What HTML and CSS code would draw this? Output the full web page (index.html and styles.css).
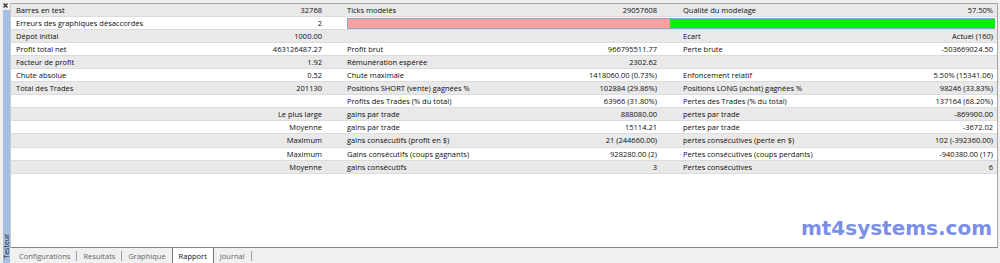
FILE: index.html
```html
<!DOCTYPE html>
<html lang="fr">
<head>
<meta charset="utf-8">
<title>Testeur - Rapport</title>
<link rel="stylesheet" href="styles.css">
</head>
<body>
<div class="app">
  <aside class="side">
    <div class="close">
      <svg viewBox="0 0 5 5" width="5" height="5"><path d="M0.5 0.5 L4.5 4.5 M4.5 0.5 L0.5 4.5" stroke="#222" stroke-width="1.1" fill="none"/></svg>
    </div>
    <div class="strip"><span class="side-title">Testeur</span></div>
  </aside>
  <div class="main">
    <div class="frame">
      <div class="report">
        <div class="row alt">
          <span class="k1">Barres en test</span><span class="v1">32768</span>
          <span class="k2">Ticks modelés</span><span class="v2">29057608</span>
          <span class="k3">Qualité du modelage</span><span class="v3">57.50%</span>
        </div>
        <div class="row">
          <span class="k1">Erreurs des graphiques désaccordés</span><span class="v1">2</span>
          <span class="bar bar-bad"></span>
          <span class="bar bar-good"></span>
        </div>
        <div class="row alt">
          <span class="k1">Dépot initial</span><span class="v1">1000.00</span>
          <span class="k2"></span><span class="v2"></span>
          <span class="k3">Ecart</span><span class="v3">Actuel (160)</span>
        </div>
        <div class="row">
          <span class="k1">Profit total net</span><span class="v1">463126487.27</span>
          <span class="k2">Profit brut</span><span class="v2">966795511.77</span>
          <span class="k3">Perte brute</span><span class="v3">-503669024.50</span>
        </div>
        <div class="row alt">
          <span class="k1">Facteur de profit</span><span class="v1">1.92</span>
          <span class="k2">Rémunération espérée</span><span class="v2">2302.62</span>
          <span class="k3"></span><span class="v3"></span>
        </div>
        <div class="row">
          <span class="k1">Chute absolue</span><span class="v1">0.52</span>
          <span class="k2">Chute maximale</span><span class="v2">1418060.00 (0.73%)</span>
          <span class="k3">Enfoncement relatif</span><span class="v3">5.50% (15341.06)</span>
        </div>
        <div class="row alt">
          <span class="k1">Total des Trades</span><span class="v1">201130</span>
          <span class="k2">Positions SHORT (vente) gagnées %</span><span class="v2">102884 (29.86%)</span>
          <span class="k3">Positions LONG (achat) gagnées %</span><span class="v3">98246 (33.83%)</span>
        </div>
        <div class="row">
          <span class="k1"></span><span class="v1"></span>
          <span class="k2">Profits des Trades (% du total)</span><span class="v2">63966 (31.80%)</span>
          <span class="k3">Pertes des Trades (% du total)</span><span class="v3">137164 (68.20%)</span>
        </div>
        <div class="row alt">
          <span class="k1"></span><span class="v1">Le plus large</span>
          <span class="k2">gains par trade</span><span class="v2">888080.00</span>
          <span class="k3">pertes par trade</span><span class="v3">-869900.00</span>
        </div>
        <div class="row">
          <span class="k1"></span><span class="v1">Moyenne</span>
          <span class="k2">gains par trade</span><span class="v2">15114.21</span>
          <span class="k3">pertes par trade</span><span class="v3">-3672.02</span>
        </div>
        <div class="row alt">
          <span class="k1"></span><span class="v1">Maximum</span>
          <span class="k2">gains consécutifs (profit en $)</span><span class="v2">21 (244660.00)</span>
          <span class="k3">pertes consécutives (perte en $)</span><span class="v3">102 (-392360.00)</span>
        </div>
        <div class="row">
          <span class="k1"></span><span class="v1">Maximum</span>
          <span class="k2">Gains consécutifs (coups gagnants)</span><span class="v2">928280.00 (2)</span>
          <span class="k3">Pertes consécutives (coups perdants)</span><span class="v3">-940380.00 (17)</span>
        </div>
        <div class="row alt">
          <span class="k1"></span><span class="v1">Moyenne</span>
          <span class="k2">gains consécutifs</span><span class="v2">3</span>
          <span class="k3">Pertes consécutives</span><span class="v3">6</span>
        </div>
      </div>
      <div class="canvas"><span class="brand">mt4systems.com</span></div>
    </div>
    <nav class="tabs">
      <span class="tab">Configurations</span><span class="sep"></span>
      <span class="tab">Resultats</span><span class="sep"></span>
      <span class="tab">Graphique</span>
      <span class="tab active">Rapport</span>
      <span class="tab">Journal</span><span class="sep"></span>
    </nav>
  </div>
</div>
</body>
</html>
```

FILE: styles.css
```css
* { box-sizing: border-box; margin: 0; padding: 0; }

html, body {
  width: 1000px;
  height: 263px;
  overflow: hidden;
  background: #f0f0f0;
}

body {
  font-family: "Open Sans", "Noto Sans", sans-serif;
  font-size: 7.5px;
  color: #0d0d0d;
}

.app {
  display: flex;
  height: 263px;
}

/* left docking strip */
.side {
  width: 10px;
  display: flex;
  flex-direction: column;
  padding-left: 3px;
}

.close {
  height: 10px;
  display: flex;
  align-items: center;
}

.close svg { display: block; }

.strip {
  flex: 1;
  width: 7px;
  background: #a7bfe1;
  display: flex;
  flex-direction: column;
  justify-content: flex-end;
  align-items: center;
  padding-bottom: 4px;
}

.side-title {
  writing-mode: vertical-rl;
  transform: rotate(180deg);
  font-size: 7px;
  line-height: 7px;
  color: #111;
}

/* main area */
.main {
  flex: 1;
  display: flex;
  flex-direction: column;
  padding-right: 2px;
}

.frame {
  flex: 1;
  margin-top: 3px;
  background: #fff;
  border: 1px solid #a5a5a5;
  border-left-color: #c9c9c9;
  border-bottom-color: #868686;
  display: flex;
  flex-direction: column;
}

.row {
  display: grid;
  grid-template-columns: 159px 165px 165px 170px 165px 162px;
  height: 13.05px;
  border-bottom: 1px solid #dcdcdc;
  align-items: center;
  line-height: 12px;
  white-space: nowrap;
}

.row.alt { background: #e9e9e9; }

.k1 { padding-left: 5px; }
.v1 { text-align: right; padding-right: 13px; }
.k2 { padding-left: 12px; }
.v2 { text-align: right; padding-right: 13px; }
.k3 { padding-left: 13px; }
.v3 { text-align: right; padding-right: 4px; }

.bar {
  height: 11px;
  border-top: 1px solid #8ea6c2;
  border-bottom: 1px solid #8ea6c2;
}

.bar-bad {
  grid-column: 3 / 5;
  margin-left: 12px;
  background: #f9a0a0;
  border-left: 1px solid #8ea6c2;
}

.bar-good {
  grid-column: 5 / 7;
  margin-right: 2px;
  background: #00f000;
}

.canvas {
  flex: 1;
  display: flex;
  justify-content: flex-end;
  align-items: flex-end;
  padding: 0 5px 9px 0;
}

.brand {
  font-family: "DejaVu Sans", Verdana, sans-serif;
  font-weight: bold;
  font-size: 20px;
  line-height: 20px;
  color: #7b8fe8;
}

/* bottom tabs */
.tabs {
  height: 15px;
  display: flex;
  align-items: stretch;
  padding-left: 3px;
  color: #666;
}

.tab {
  display: flex;
  align-items: center;
  padding: 0 6px;
}

.tab.active {
  background: #fff;
  color: #111;
  border-left: 1px solid #7a7a7a;
  border-right: 1px solid #7a7a7a;
}

.sep {
  width: 1px;
  height: 10px;
  align-self: center;
  background: #a0a0a0;
}
```
